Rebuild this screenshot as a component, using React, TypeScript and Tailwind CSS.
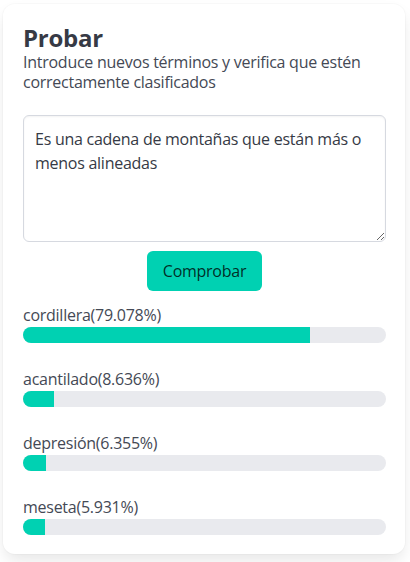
const results = [
  { label: 'cordillera', value: 79.078 },
  { label: 'acantilado', value: 8.636 },
  { label: 'depresión', value: 6.355 },
  { label: 'meseta', value: 5.931 },
];

export default function App() {
  return (
    <div
      className="min-h-[562px] bg-white pt-[4px] pl-[3px]"
      style={{ fontFamily: '"Open Sans", "Noto Sans", sans-serif' }}
    >
      <div className="w-[402px] rounded-xl bg-white pl-5 pr-[19px] pt-5 pb-[19px] shadow-[0_8px_16px_-2px_rgba(10,10,10,0.1),0_0_0_1px_rgba(10,10,10,0.02)] tracking-[-0.26px]">
        <h1 className="text-[24px] font-bold leading-[27px] text-[#363a45]">Probar</h1>
        <p className="mt-[1px] text-[16px] leading-[20px] text-[#444955]">
          Introduce nuevos términos y verifica que estén correctamente clasificados
        </p>
        <textarea
          className="mt-[23px] block h-[127px] w-full rounded-[6px] border border-[#d6d9e0] bg-white px-[11px] py-[11px] text-[16px] leading-6 text-[#363a45] shadow-[inset_0_1px_2px_rgba(10,10,10,0.05)] outline-none"
          defaultValue="Es una cadena de montañas que están más o menos alineadas"
        />
        <div className="mt-[9px] flex justify-center">
          <button className="h-10 rounded-[6px] bg-[#00d1b2] px-4 text-[16px] font-medium text-black/80">
            Comprobar
          </button>
        </div>
        <div className="mt-3 flex flex-col gap-6">
          {results.map((r) => (
            <div key={r.label}>
              <div className="text-[16px] leading-6 text-[#444955]">
                {r.label}({r.value}%)
              </div>
              <div className="h-4 w-full overflow-hidden rounded-full bg-[#e9eaee]">
                <div className="h-full bg-[#00d1b2]" style={{ width: `${r.value}%` }} />
              </div>
            </div>
          ))}
        </div>
      </div>
    </div>
  );
}
